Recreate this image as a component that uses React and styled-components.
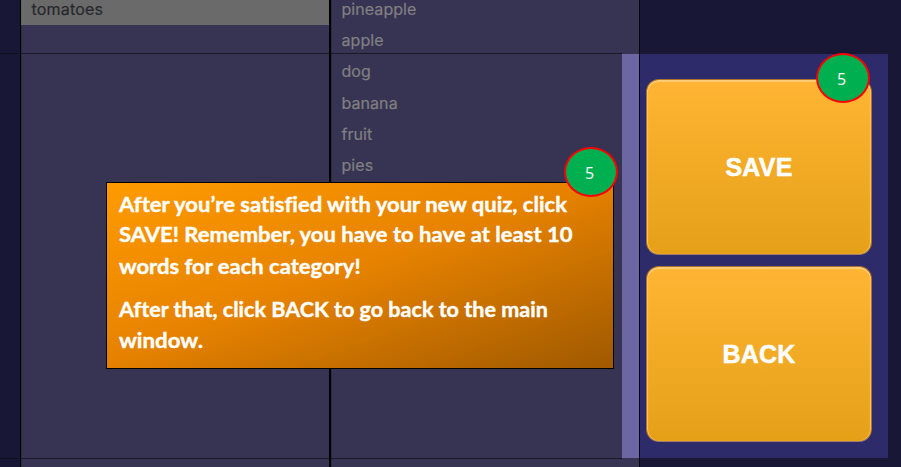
import React from 'react';
import styled, { createGlobalStyle } from 'styled-components';

const GlobalStyle = createGlobalStyle`
  * { box-sizing: border-box; }
  body { margin: 0; background: #181735; }
`;

const Page = styled.main`
  position: relative;
  display: grid;
  grid-template-columns: 20px 311px 291px 17px 262px;
  width: 901px;
  height: 467px;
  overflow: hidden;
  background: #181735;
`;

const Margin = styled.div`
  background: #181735;
`;

const WordList = styled.ul`
  display: flex;
  flex-direction: column;
  margin: 0;
  padding: 0;
  list-style: none;
  overflow: hidden;
  background: #363452;
  border-left: ${(p) => (p.$first ? '1px solid #000' : '0')};
  border-right: ${(p) => (p.$first ? '2px solid #000' : '0')};
  box-shadow: inset 1px 0 #2c2b43;
`;

const Word = styled.li`
  flex: none;
  height: ${(p) => (p.$selected ? 25 : 31.2)}px;
  margin-top: ${(p) => (p.$lead ? -6 : 0)}px;
  padding-left: 10.5px;
  font: 400 16px/${(p) => (p.$selected ? 19 : 31.2)}px Inter, sans-serif;
  letter-spacing: ${(p) => (p.$selected ? 0.2 : 0.06)}px;
  -webkit-text-stroke: 0.2px currentColor;
  color: ${(p) => (p.$selected ? '#25282c' : '#827f83')};
  background: ${(p) => (p.$selected ? '#6a6a6a' : 'transparent')};
`;

const Rule = styled.hr`
  position: absolute;
  left: 0;
  top: ${(p) => p.$top}px;
  width: 622px;
  height: 1px;
  margin: 0;
  border: 0;
  background: rgba(10, 10, 20, 0.65);
`;

const Gutter = styled.div`
  display: flex;
  padding: 54px 0 9px;
  background: #363452;
`;

const ScrollStrip = styled.div`
  flex: 1;
  background: #6c66a3;
`;

const Side = styled.section`
  padding: 54px 13px 9px 0;
  border-left: 1px solid #05050d;
`;

const Actions = styled.div`
  display: flex;
  flex-direction: column;
  gap: 11px;
  height: 404px;
  padding: 25px 16px 16px 6px;
  background: #2e2b6a;
`;

const ActionButton = styled.button`
  width: 226px;
  height: 176px;
  flex: none;
  padding: 0;
  border: 1px solid #a9732e;
  border-bottom-color: #9b7d68;
  border-radius: 13px;
  background: linear-gradient(#ffb533, #e5a018);
  box-shadow: inset 0 2px 1px #ffcd78, inset 1px 0 1px #ffc665,
    inset -1px 0 1px #ffc665, inset 0 -1px 1px #e79b0b;
  color: #fff;
  font: 700 25px/1 'Liberation Sans', Arial, sans-serif;
  letter-spacing: 0.25px;
  -webkit-text-stroke: 0.5px #fff;
`;

const Callout = styled.aside`
  position: absolute;
  left: 106px;
  top: 182px;
  width: 508px;
  height: 187px;
  padding: 6px 12px;
  border: 1px solid #000;
  background: linear-gradient(to bottom right, #ff9b00 0%, #e68200 48%, #a05900 100%);
`;

const Paragraph = styled.p`
  display: grid;
  grid-template-rows: ${(p) => p.$rows};
  margin: 0 0 12px;
`;

const Line = styled.span`
  display: block;
  width: max-content;
  color: #fff;
  font: 700 21.5px/31px Lato, sans-serif;
  font-variant-ligatures: none;
  -webkit-text-stroke: 0.4px #fff;
  transform: scaleX(${(p) => p.$stretch || 1});
  transform-origin: left;
  white-space: nowrap;
`;

const StepBadge = styled.div`
  position: absolute;
  left: ${(p) => p.$left}px;
  top: ${(p) => p.$top}px;
  display: grid;
  place-items: center;
  width: 54px;
  height: 50px;
  padding: 2px 3px 0 0;
  border: 2px solid #f00;
  border-radius: 50%;
  background: #00b050;
  color: #fff;
  font: 400 16px/1 'Open Sans', sans-serif;
`;

const words = ['pineapple', 'apple', 'dog', 'banana', 'fruit', 'pies'];

export default function App() {
  return (
    <>
      <GlobalStyle />
      <Page>
        <Margin />
        <WordList $first>
          <Word $selected>tomatoes</Word>
        </WordList>
        <WordList>
          {words.map((word, i) => (
            <Word key={word} $lead={i === 0}>{word}</Word>
          ))}
        </WordList>
        <Gutter>
          <ScrollStrip />
        </Gutter>
        <Side>
          <Actions>
            <ActionButton>SAVE</ActionButton>
            <ActionButton>BACK</ActionButton>
          </Actions>
        </Side>
        <Rule $top={53} />
        <Rule $top={458} />
        <Callout>
          <Paragraph $rows="30px 32px 31px">
            <Line $stretch={1.024}>After you’re satisfied with your new quiz, click</Line>
            <Line $stretch={1.024}>SAVE! Remember, you have to have at least 10</Line>
            <Line $stretch={1.023}>words for each category!</Line>
          </Paragraph>
          <Paragraph $rows="31px 31px">
            <Line $stretch={1.003}>After that, click BACK to go back to the main</Line>
            <Line $stretch={1.035}>window.</Line>
          </Paragraph>
        </Callout>
        <StepBadge $left={564} $top={147}>5</StepBadge>
        <StepBadge $left={816} $top={53}>5</StepBadge>
      </Page>
    </>
  );
}
